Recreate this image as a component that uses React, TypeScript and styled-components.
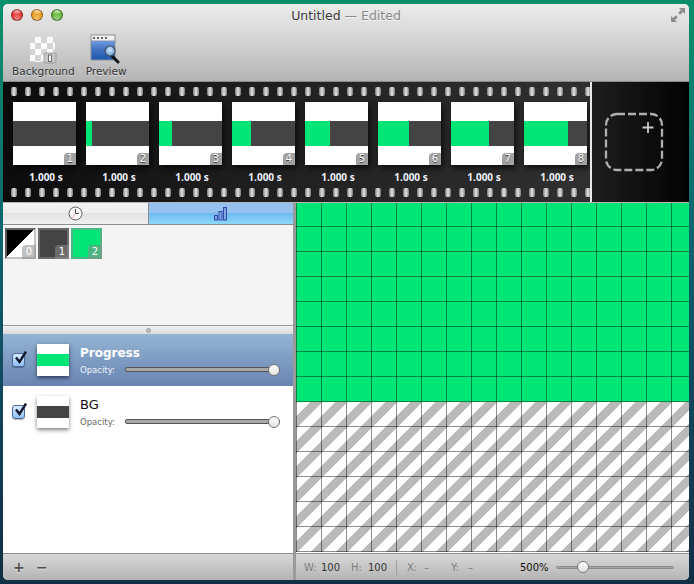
import styled, { createGlobalStyle } from "styled-components";

const GlobalStyle = createGlobalStyle`
  html, body {
    margin: 0;
    padding: 0;
    height: 584px;
    overflow: hidden;
  }
  body {
    background: linear-gradient(180deg, #0a8f6b 0%, #0b7f70 18%, #0f5f6c 45%, #123f58 75%, #122f45 100%);
    font-family: "DejaVu Sans", "Noto Sans", sans-serif;
  }
`;

const frames = [0, 6, 13, 19, 25, 31, 38, 44];
const swatches = [
  { id: 0, kind: "split" },
  { id: 1, kind: "dark" },
  { id: 2, kind: "green" },
];
const holes = Array.from({ length: 42 }, (_, i) => i);

const App = () => {
  return (
    <>
      <GlobalStyle />
      <Window>
        <Chrome>
          <TitleBar>
            <Lights>
              <Light $color="#e8352e" />
              <Light $color="#e99a18" />
              <Light $color="#5cb531" />
            </Lights>
            <Title>
              Untitled <Edited>— Edited</Edited>
            </Title>
            <ExpandIcon />
          </TitleBar>
          <Toolbar>
            <ToolButton>
              <BackgroundIcon />
              <ToolLabel>Background</ToolLabel>
            </ToolButton>
            <ToolButton>
              <PreviewIcon />
              <ToolLabel>Preview</ToolLabel>
            </ToolButton>
          </Toolbar>
        </Chrome>

        <FilmRow>
          <Film>
            <Perforations>
              {holes.map((h) => (
                <Hole key={h} />
              ))}
            </Perforations>
            <Frames>
              {frames.map((fill, i) => (
                <Frame key={i}>
                  <Thumb>
                    <Band>
                      <BandFill $width={fill} />
                    </Band>
                    <ThumbBadge>{i + 1}</ThumbBadge>
                  </Thumb>
                  <Duration>1.000 s</Duration>
                </Frame>
              ))}
            </Frames>
            <Perforations>
              {holes.map((h) => (
                <Hole key={h} />
              ))}
            </Perforations>
          </Film>
          <AddPanel>
            <AddIcon />
          </AddPanel>
        </FilmRow>

        <Main>
          <LeftPanel>
            <Tabs>
              <Tab>
                <ClockIcon />
              </Tab>
              <Tab $active>
                <BarsIcon />
              </Tab>
            </Tabs>
            <SwatchArea>
              {swatches.map((s) => (
                <Swatch key={s.id} $kind={s.kind}>
                  <SwatchBadge>{s.id}</SwatchBadge>
                </Swatch>
              ))}
            </SwatchArea>
            <Splitter>
              <SplitterDot />
            </Splitter>
            <Layers>
              <LayerRow $selected>
                <CheckBox />
                <LayerThumb $selected>
                  <LayerBand $color="#00e676" />
                </LayerThumb>
                <LayerInfo>
                  <LayerName $selected>Progress</LayerName>
                  <OpacityRow>
                    <OpacityLabel $selected>Opacity:</OpacityLabel>
                    <Track>
                      <Knob />
                    </Track>
                  </OpacityRow>
                </LayerInfo>
              </LayerRow>
              <LayerRow>
                <CheckBox />
                <LayerThumb>
                  <LayerBand $color="#444444" />
                </LayerThumb>
                <LayerInfo>
                  <LayerName>BG</LayerName>
                  <OpacityRow>
                    <OpacityLabel>Opacity:</OpacityLabel>
                    <Track>
                      <Knob />
                    </Track>
                  </OpacityRow>
                </LayerInfo>
              </LayerRow>
            </Layers>
            <LeftFooter>
              <FooterButton>+</FooterButton>
              <FooterButton>−</FooterButton>
            </LeftFooter>
          </LeftPanel>

          <RightPanel>
            <Canvas>
              <GreenArea />
              <StripedArea />
            </Canvas>
            <StatusBar>
              <Stat $width={47}>
                <StatKey>W:</StatKey>100
              </Stat>
              <Stat $width={45}>
                <StatKey>H:</StatKey>100
              </Stat>
              <StatDivider />
              <Stat $width={44}>
                <StatKey>X:</StatKey>
                <StatDash>–</StatDash>
              </Stat>
              <Stat $width={69}>
                <StatKey>Y:</StatKey>
                <StatDash>–</StatDash>
              </Stat>
              <Zoom>500%</Zoom>
              <ZoomTrack>
                <ZoomKnob />
              </ZoomTrack>
            </StatusBar>
          </RightPanel>
        </Main>
      </Window>
    </>
  );
};

export default App;

const ExpandIcon = () => (
  <ExpandSvg viewBox="0 0 14 14" width="14" height="14">
    <path d="M8 0h6v6l-2-2-2.800 2.800-2-2L10 2z" fill="#8e8e8e" />
    <path d="M6 14H0V8l2 2 2.800-2.800 2 2L4 12z" fill="#8e8e8e" />
  </ExpandSvg>
);

const BackgroundIcon = () => (
  <svg width="28" height="27" viewBox="0 0 28 27">
    <defs>
      <pattern id="chk" width="12" height="12" patternUnits="userSpaceOnUse">
        <rect width="12" height="12" fill="#fbfbfb" />
        <rect width="6" height="6" fill="#d4d4d4" />
        <rect x="6" y="6" width="6" height="6" fill="#d4d4d4" />
      </pattern>
    </defs>
    <rect x="1" y="0" width="25" height="25" fill="url(#chk)" />
    <rect x="15" y="16" width="12" height="10" rx="1.500" fill="#c6c6c6" stroke="#8a8a8a" strokeWidth="0.700" />
    <rect x="19.500" y="18" width="3" height="6.500" fill="#f4f4f4" stroke="#555" strokeWidth="0.800" />
  </svg>
);

const PreviewIcon = () => (
  <svg width="32" height="30" viewBox="0 0 32 30">
    <defs>
      <linearGradient id="pv" x1="0" y1="0" x2="0" y2="1">
        <stop offset="0" stopColor="#6f9ae0" />
        <stop offset="0.5" stopColor="#3f6fc0" />
        <stop offset="1" stopColor="#1b57ad" />
      </linearGradient>
      <radialGradient id="lens" cx="0.5" cy="0.4" r="0.6">
        <stop offset="0" stopColor="#d4e8fb" />
        <stop offset="1" stopColor="#5f9bdc" />
      </radialGradient>
    </defs>
    <rect x="0.500" y="0.500" width="25" height="26" fill="#8a8f98" />
    <rect x="1.500" y="1.500" width="23" height="5" fill="#f1f1f1" />
    <path d="M3 3h2v2H3zM7 3h2v2H7zM11 3h2v2h-2zM15 3h2v2h-2z" fill="#666" />
    <rect x="1.500" y="7" width="23" height="18.500" fill="url(#pv)" />
    <path d="M20 20l8 8" stroke="#111" strokeWidth="3" strokeLinecap="round" />
    <circle cx="20" cy="17" r="5" fill="url(#lens)" stroke="#444e5c" strokeWidth="1.200" />
  </svg>
);

const AddIcon = () => (
  <svg width="60" height="60" viewBox="0 0 60 60">
    <rect
      x="2"
      y="2"
      width="56"
      height="56"
      rx="11"
      fill="none"
      stroke="#b0b0b0"
      strokeWidth="2.300"
      strokeDasharray="8 3"
    />
    <path d="M44 10v11M38.500 15.500h11" stroke="#c8c8c8" strokeWidth="1.800" fill="none" />
  </svg>
);

const ClockIcon = () => (
  <svg width="15" height="15" viewBox="0 0 15 15">
    <circle cx="7.500" cy="7.500" r="6.500" fill="#f7f7f7" stroke="#666" strokeWidth="1" />
    <path d="M7.500 3v4.500l3.500 0" stroke="#333" strokeWidth="0.900" fill="none" />
    <path d="M7.500 7.500L4.500 11.500" stroke="#e88" strokeWidth="0.800" />
  </svg>
);

const BarsIcon = () => (
  <svg width="14" height="14" viewBox="0 0 14 14">
    <g fill="#7ea6e0" stroke="#3348a8" strokeWidth="1">
      <rect x="0.500" y="8.500" width="3" height="4.500" />
      <rect x="5" y="4.500" width="3" height="8.500" />
      <rect x="9.500" y="0.500" width="3" height="12.500" />
    </g>
  </svg>
);

const CheckBox = () => (
  <CheckFrame>
    <svg width="15" height="15" viewBox="0 0 15 15">
      <path d="M3 6.500l3.500 4.500L13 0.500" stroke="#10182e" strokeWidth="2.400" fill="none" />
    </svg>
  </CheckFrame>
);

const Window = styled.div`
  width: 686px;
  height: 576px;
  margin: 4px 0 0 3px;
  display: flex;
  flex-direction: column;
  border-radius: 5px;
  overflow: hidden;
  background: #fff;
`;

const Chrome = styled.header`
  height: 78px;
  flex: none;
  box-sizing: border-box;
  border-bottom: 1px solid #8c8c8c;
  background: linear-gradient(180deg, #ececec 0%, #d2d2d2 50%, #b4b4b4 100%);
`;

const TitleBar = styled.div`
  height: 22px;
  position: relative;
  display: flex;
  align-items: center;
  justify-content: center;
`;

const Lights = styled.div`
  position: absolute;
  left: 8px;
  top: 5px;
  display: flex;
  gap: 8px;
`;

const Light = styled.span<{ $color: string }>`
  width: 12px;
  height: 12px;
  border-radius: 50%;
  box-sizing: border-box;
  border: 1px solid rgba(0, 0, 0, 0.4);
  background: radial-gradient(circle at 50% 85%, #ffffff66 0%, transparent 60%),
    radial-gradient(ellipse 60% 30% at 50% 15%, #ffffffaa 0%, transparent 100%), ${(p) => p.$color};
`;

const Title = styled.div`
  font-size: 12.500px;
  color: #3a3a3a;
  text-shadow: 0 1px 0 rgba(255, 255, 255, 0.6);
  margin-top: 1px;
`;

const Edited = styled.span`
  color: #8a8a8a;
`;

const ExpandSvg = styled.svg`
  position: absolute;
  right: 4px;
  top: 4px;
`;

const Toolbar = styled.div`
  display: flex;
  padding: 7px 0 0 9px;
  gap: 11px;
`;

const ToolButton = styled.div`
  display: flex;
  flex-direction: column;
  align-items: center;
  justify-content: flex-end;
  height: 45px;
  gap: 1px;
`;

const ToolLabel = styled.span`
  font-size: 10.500px;
  line-height: 13px;
  color: #333;
  text-shadow: 0 1px 0 rgba(255, 255, 255, 0.5);
`;

const FilmRow = styled.section`
  height: 121px;
  flex: none;
  display: flex;
  background: #000;
  border-bottom: 1px solid #b5b5b5;
  box-sizing: border-box;
`;

const Film = styled.div`
  width: 587px;
  flex: none;
  overflow: hidden;
  display: flex;
  flex-direction: column;
  background: linear-gradient(90deg, #0c0c0c 0%, #1e1e1e 40%, #303030 100%);
  padding-top: 5px;
`;

const Perforations = styled.div`
  height: 9px;
  flex: none;
  display: flex;
  gap: 8px;
  padding-left: 8px;
`;

const Hole = styled.span`
  width: 6px;
  height: 9px;
  flex: none;
  border-radius: 2px;
  background: linear-gradient(90deg, #777, #e6e6e6 50%, #777);
`;

const Frames = styled.div`
  display: flex;
  gap: 10px;
  padding-left: 10px;
  margin-top: 6px;
  height: 86px;
`;

const Frame = styled.div`
  width: 63px;
  flex: none;
  display: flex;
  flex-direction: column;
  align-items: center;
`;

const Thumb = styled.div`
  width: 63px;
  height: 63px;
  position: relative;
  background: #fff;
  box-shadow: 2px 3px 6px rgba(0, 0, 0, 0.7);
  display: flex;
  align-items: center;
`;

const Band = styled.div`
  width: 100%;
  height: 25px;
  background: #444;
`;

const BandFill = styled.div<{ $width: number }>`
  width: ${(p) => p.$width}px;
  height: 100%;
  background: #00e676;
`;

const ThumbBadge = styled.span`
  position: absolute;
  right: 0;
  bottom: 0;
  width: 12px;
  height: 12px;
  border-radius: 4px 0 0 0;
  background: #a2a2a2;
  color: #fff;
  font-size: 10px;
  line-height: 12px;
  text-align: center;
  text-shadow: 0 1px 0 #444;
`;

const Duration = styled.span`
  margin: 6px 0 0 3px;
  font-family: "Open Sans", "DejaVu Sans", sans-serif;
  font-size: 10px;
  font-weight: 700;
  line-height: 13px;
  color: #eef2fa;
  white-space: nowrap;
`;

const AddPanel = styled.div`
  flex: 1;
  border-left: 2px solid #e8e8e8;
  display: flex;
  align-items: center;
  justify-content: center;
  padding: 0 13px 0 0;
  background: linear-gradient(90deg, #1e1e1e, #020202);
`;

const Main = styled.div`
  flex: 1;
  display: flex;
  min-height: 0;
`;

const LeftPanel = styled.div`
  width: 290px;
  flex: none;
  display: flex;
  flex-direction: column;
  border-right: 3px solid #9a9a9a;
`;

const Tabs = styled.div`
  height: 22px;
  flex: none;
  display: flex;
  box-sizing: border-box;
  border-bottom: 1px solid #8c8c8c;
`;

const Tab = styled.div<{ $active?: boolean }>`
  flex: none;
  width: 145px;
  display: flex;
  align-items: center;
  justify-content: center;
  background: ${(p) =>
    p.$active
      ? "linear-gradient(180deg, #95c1ee 0%, #95c1ee 45%, #6cbcf2 50%, #8ed8fa 100%)"
      : "linear-gradient(180deg, #f2f2f2 0%, #eeeeee 45%, #e2e2e2 50%, #f0f0f0 100%)"};
  border-left: ${(p) => (p.$active ? "1px solid #8c8c8c" : "none")};
  box-sizing: border-box;
`;

const SwatchArea = styled.div`
  height: 100px;
  flex: none;
  box-sizing: border-box;
  padding: 3px 0 0 2px;
  display: flex;
  align-items: flex-start;
  gap: 2px;
  background: #f4f4f4;
`;

const swatchBackground: Record<string, string> = {
  split: "linear-gradient(135deg, #000 50%, #fff 50%)",
  dark: "#444",
  green: "#00e676",
};

const swatchBorder: Record<string, string> = {
  split: "#666 #c4c4c4 #c4c4c4 #555",
  dark: "#6a6a6a",
  green: "#4cb584",
};

const Swatch = styled.div<{ $kind: string }>`
  width: 31px;
  height: 31px;
  box-sizing: border-box;
  border: 2px solid;
  border-color: ${(p) => swatchBorder[p.$kind]};
  background: ${(p) => swatchBackground[p.$kind]};
  position: relative;
`;

const SwatchBadge = styled.span`
  position: absolute;
  right: -2px;
  bottom: -2px;
  width: 14px;
  height: 14px;
  border-radius: 4px 0 0 0;
  background: rgba(140, 140, 140, 0.55);
  color: #fff;
  font-size: 10px;
  line-height: 14px;
  text-align: center;
`;

const Splitter = styled.div`
  height: 9px;
  flex: none;
  box-sizing: border-box;
  border-top: 1px solid #9a9a9a;
  display: flex;
  align-items: center;
  justify-content: center;
  background: linear-gradient(180deg, #f2f2f2, #dcdcdc);
`;

const SplitterDot = styled.span`
  width: 3px;
  height: 3px;
  border-radius: 50%;
  background: #c0c0c0;
  border: 0.500px solid #999;
`;

const Layers = styled.div`
  flex: 1;
  background: #fff;
`;

const LayerRow = styled.div<{ $selected?: boolean }>`
  height: 52px;
  box-sizing: border-box;
  display: flex;
  align-items: center;
  padding: 0 0 0 9px;
  background: ${(p) => (p.$selected ? "linear-gradient(180deg, #94b4d3, #6984b2)" : "#fff")};
`;

const CheckFrame = styled.span`
  width: 13px;
  height: 14px;
  flex: none;
  position: relative;
  box-sizing: border-box;
  border: 1px solid #4a6a9e;
  border-radius: 3px;
  background: linear-gradient(180deg, #d8ecff, #8fc0f4);
  box-shadow: 0 1px 1px rgba(0, 0, 0, 0.3);

  svg {
    position: absolute;
    left: 0;
    top: -3px;
  }
`;

const LayerThumb = styled.div<{ $selected?: boolean }>`
  width: 32px;
  height: 32px;
  flex: none;
  margin-left: 12px;
  display: flex;
  align-items: center;
  background: #fff;
  box-shadow: 0 2px 4px ${(p) => (p.$selected ? "rgba(0, 0, 30, 0.6)" : "rgba(0, 0, 0, 0.5)")};
`;

const LayerBand = styled.div<{ $color: string }>`
  width: 100%;
  height: 12px;
  background: ${(p) => p.$color};
`;

const LayerInfo = styled.div`
  margin-left: 11px;
  flex: 1;
  display: flex;
  flex-direction: column;
  gap: 3px;
`;

const LayerName = styled.div<{ $selected?: boolean }>`
  font-size: ${(p) => (p.$selected ? "12px" : "13px")};
  line-height: 16px;
  font-weight: ${(p) => (p.$selected ? 700 : 400)};
  color: ${(p) => (p.$selected ? "#fff" : "#111")};
`;

const OpacityRow = styled.div`
  display: flex;
  align-items: center;
  gap: 9px;
`;

const OpacityLabel = styled.span<{ $selected?: boolean }>`
  font-size: 8.500px;
  line-height: 12px;
  width: 36px;
  color: ${(p) => (p.$selected ? "#f2f5fa" : "#666")};
`;

const Track = styled.div`
  width: 153px;
  height: 3px;
  border-radius: 2px;
  background: #a8a8a8;
  border: 0.500px solid #555;
  display: flex;
  align-items: center;
  justify-content: flex-end;
`;

const Knob = styled.span`
  width: 10px;
  height: 10px;
  flex: none;
  margin-right: -1px;
  border-radius: 50%;
  background: linear-gradient(180deg, #fff, #e2e2e2);
  border: 1px solid #777;
`;

const LeftFooter = styled.div`
  height: 27px;
  flex: none;
  box-sizing: border-box;
  border-top: 1px solid #8c8c8c;
  display: flex;
  align-items: center;
  padding: 0 0 0 10px;
  gap: 13px;
  background: linear-gradient(180deg, #d8d8d8, #b4b4b4);
`;

const FooterButton = styled.span`
  width: 10px;
  font-size: 14px;
  font-weight: 700;
  line-height: 14px;
  text-align: center;
  color: #505050;
  text-shadow: 0 1px 0 rgba(255, 255, 255, 0.5);
`;

const RightPanel = styled.div`
  flex: 1;
  display: flex;
  flex-direction: column;
  min-width: 0;
`;

const Canvas = styled.div`
  flex: 1;
  background: #fff;
`;

const gridLines = (alpha: number) => `
  linear-gradient(90deg, transparent 24px, rgba(0, 0, 0, ${alpha}) 24px),
  linear-gradient(180deg, transparent 24px, rgba(0, 0, 0, ${alpha}) 24px)
`;

const GreenArea = styled.div`
  height: 199px;
  background-color: #00e676;
  background-image: ${gridLines(0.42)};
  background-size: 25px 25px;
  background-position: 1px -1px;
`;

const StripedArea = styled.div`
  height: 150px;
  background-image: ${gridLines(0.45)},
    linear-gradient(
      135deg,
      #bababa 4%,
      #fff 4%,
      #fff 30%,
      #bababa 30%,
      #bababa 54%,
      #fff 54%,
      #fff 80%,
      #bababa 80%
    );
  background-size: 25px 25px;
  background-position: 1px 0, 1px 0, 0 0;
`;

const StatusBar = styled.div`
  height: 27px;
  flex: none;
  box-sizing: border-box;
  border-top: 1px solid #8c8c8c;
  display: flex;
  align-items: center;
  padding: 0 0 0 8px;
  background: linear-gradient(180deg, #d8d8d8, #b4b4b4);
  font-size: 10px;
  color: #333;
`;

const Stat = styled.span<{ $width: number }>`
  width: ${(p) => p.$width}px;
  flex: none;
  white-space: pre;
`;

const StatKey = styled.span`
  display: inline-block;
  width: 17px;
  color: #7c7c7c;
`;

const StatDash = styled.span`
  color: #7c7c7c;
`;

const StatDivider = styled.span`
  width: 1px;
  height: 15px;
  margin-right: 10px;
  background: #a0a0a0;
`;

const Zoom = styled.span`
  width: 36px;
  color: #111;
  flex: none;
`;

const ZoomTrack = styled.div`
  width: 118px;
  height: 3px;
  border-radius: 2px;
  background: #a6a6a6;
  border: 1px solid #8c8c8c;
  display: flex;
  align-items: center;
  padding-left: 20px;
  box-sizing: border-box;
`;

const ZoomKnob = styled.span`
  width: 10px;
  height: 10px;
  flex: none;
  border-radius: 50%;
  background: linear-gradient(180deg, #fff, #e0e0e0);
  border: 1px solid #777;
`;
